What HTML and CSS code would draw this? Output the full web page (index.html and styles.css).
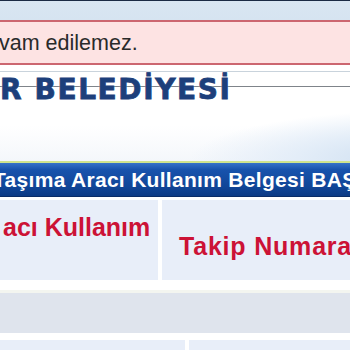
FILE: index.html
```html
<!DOCTYPE html>
<html lang="tr">
<head>
<meta charset="utf-8">
<title>Belediye</title>
<link rel="stylesheet" href="styles.css">
</head>
<body>
<div class="page">
  <div class="topband">
    <div class="alert"><span class="alert-text">vam edilemez.</span></div>
  </div>
  <div class="header">
    <div class="logo-title">R BELEDİYESİ</div>
  </div>
  <div class="titlebar"><span class="titlebar-text">Taşıma Aracı Kullanım Belgesi BAŞVURU</span></div>
  <div class="row row-a">
    <div class="cell cell-left"><span class="label label-left">acı Kullanım</span></div>
    <div class="cell cell-right"><span class="label label-right">Takip Numarası</span></div>
  </div>
  <div class="graybar"></div>
  <div class="row row-b">
    <div class="cell cell-b1"></div>
    <div class="cell cell-b2"></div>
  </div>
</div>
</body>
</html>
```

FILE: styles.css
```css
html, body {
  margin: 0;
  padding: 0;
  background: #ffffff;
  overflow: hidden;
}
.page {
  width: 350px;
  height: 350px;
  overflow: hidden;
  font-family: "Liberation Sans", Arial, sans-serif;
}
.topband {
  border-top: 1px solid #1b2a44;
  background: linear-gradient(#d9e6f2, #cfdfee);
  padding-top: 19px;
}
.alert {
  height: 41px;
  background: #fde3e3;
  border-top: 2px solid #cc6670;
  border-bottom: 2px solid #cc6670;
  display: flex;
  align-items: center;
  overflow: hidden;
  white-space: nowrap;
}
.alert-text {
  font-size: 21.5px;
  color: #2a2a2a;
  margin-left: -1px;
  padding-top: 2px;
}
.header {
  margin-top: 6px;
  height: 89px;
  border-top: 1px solid #c9d3dc;
  background:
    linear-gradient(#7f848a, #7f848a) 0 14px / 100% 1px no-repeat,
    radial-gradient(ellipse 240px 50px at 430px 88px, #c9dcef 0%, #e3edf8 55%, rgba(255,255,255,0) 100%),
    linear-gradient(#ffffff 0%, #ffffff 60%, #f4f7fb 100%);
}
.logo-title {
  font-family: "DejaVu Sans", sans-serif;
  font-weight: bold;
  font-size: 28px;
  color: #1d3f7b;
  line-height: 32px;
  padding-top: 2px;
  white-space: nowrap;
  letter-spacing: 1.6px;
  -webkit-text-stroke: 0.8px #1d3f7b;
  text-shadow: 0 0 2px #ffffff;
}
.titlebar {
  border-top: 2px solid #cfe48e;
  height: 33px;
  background: linear-gradient(#3572c9 0%, #1853ad 20%, #114698 70%, #0c3a84 100%);
  border-bottom: 1px solid #0a2c66;
  display: flex;
  align-items: center;
  white-space: nowrap;
  overflow: hidden;
}
.titlebar-text {
  color: #ffffff;
  font-weight: bold;
  font-size: 21px;
  letter-spacing: 0.3px;
  margin-left: -7px;
  padding-top: 1px;
}
.row {
  display: grid;
  background: #ffffff;
  column-gap: 4px;
}
.row-a {
  grid-template-columns: 158px 1fr;
  margin-top: 3px;
  height: 80px;
  border-bottom: 10px solid #ffffff;
}
.cell {
  background: #e8eef9;
  display: flex;
  white-space: nowrap;
  overflow: hidden;
}
.label {
  color: #cc1236;
  font-weight: bold;
  font-size: 25px;
}
.label-left {
  margin-left: 3px;
  padding-top: 13px;
}
.label-right {
  margin-left: 17px;
  padding-top: 32px;
  letter-spacing: 0.8px;
}
.graybar {
  border-top: 3px solid #f3f5f0;
  height: 40px;
  background: #dfe4ed;
  margin-bottom: 7px;
}
.row-b {
  grid-template-columns: 185px 1fr;
  height: 20px;
}
```
